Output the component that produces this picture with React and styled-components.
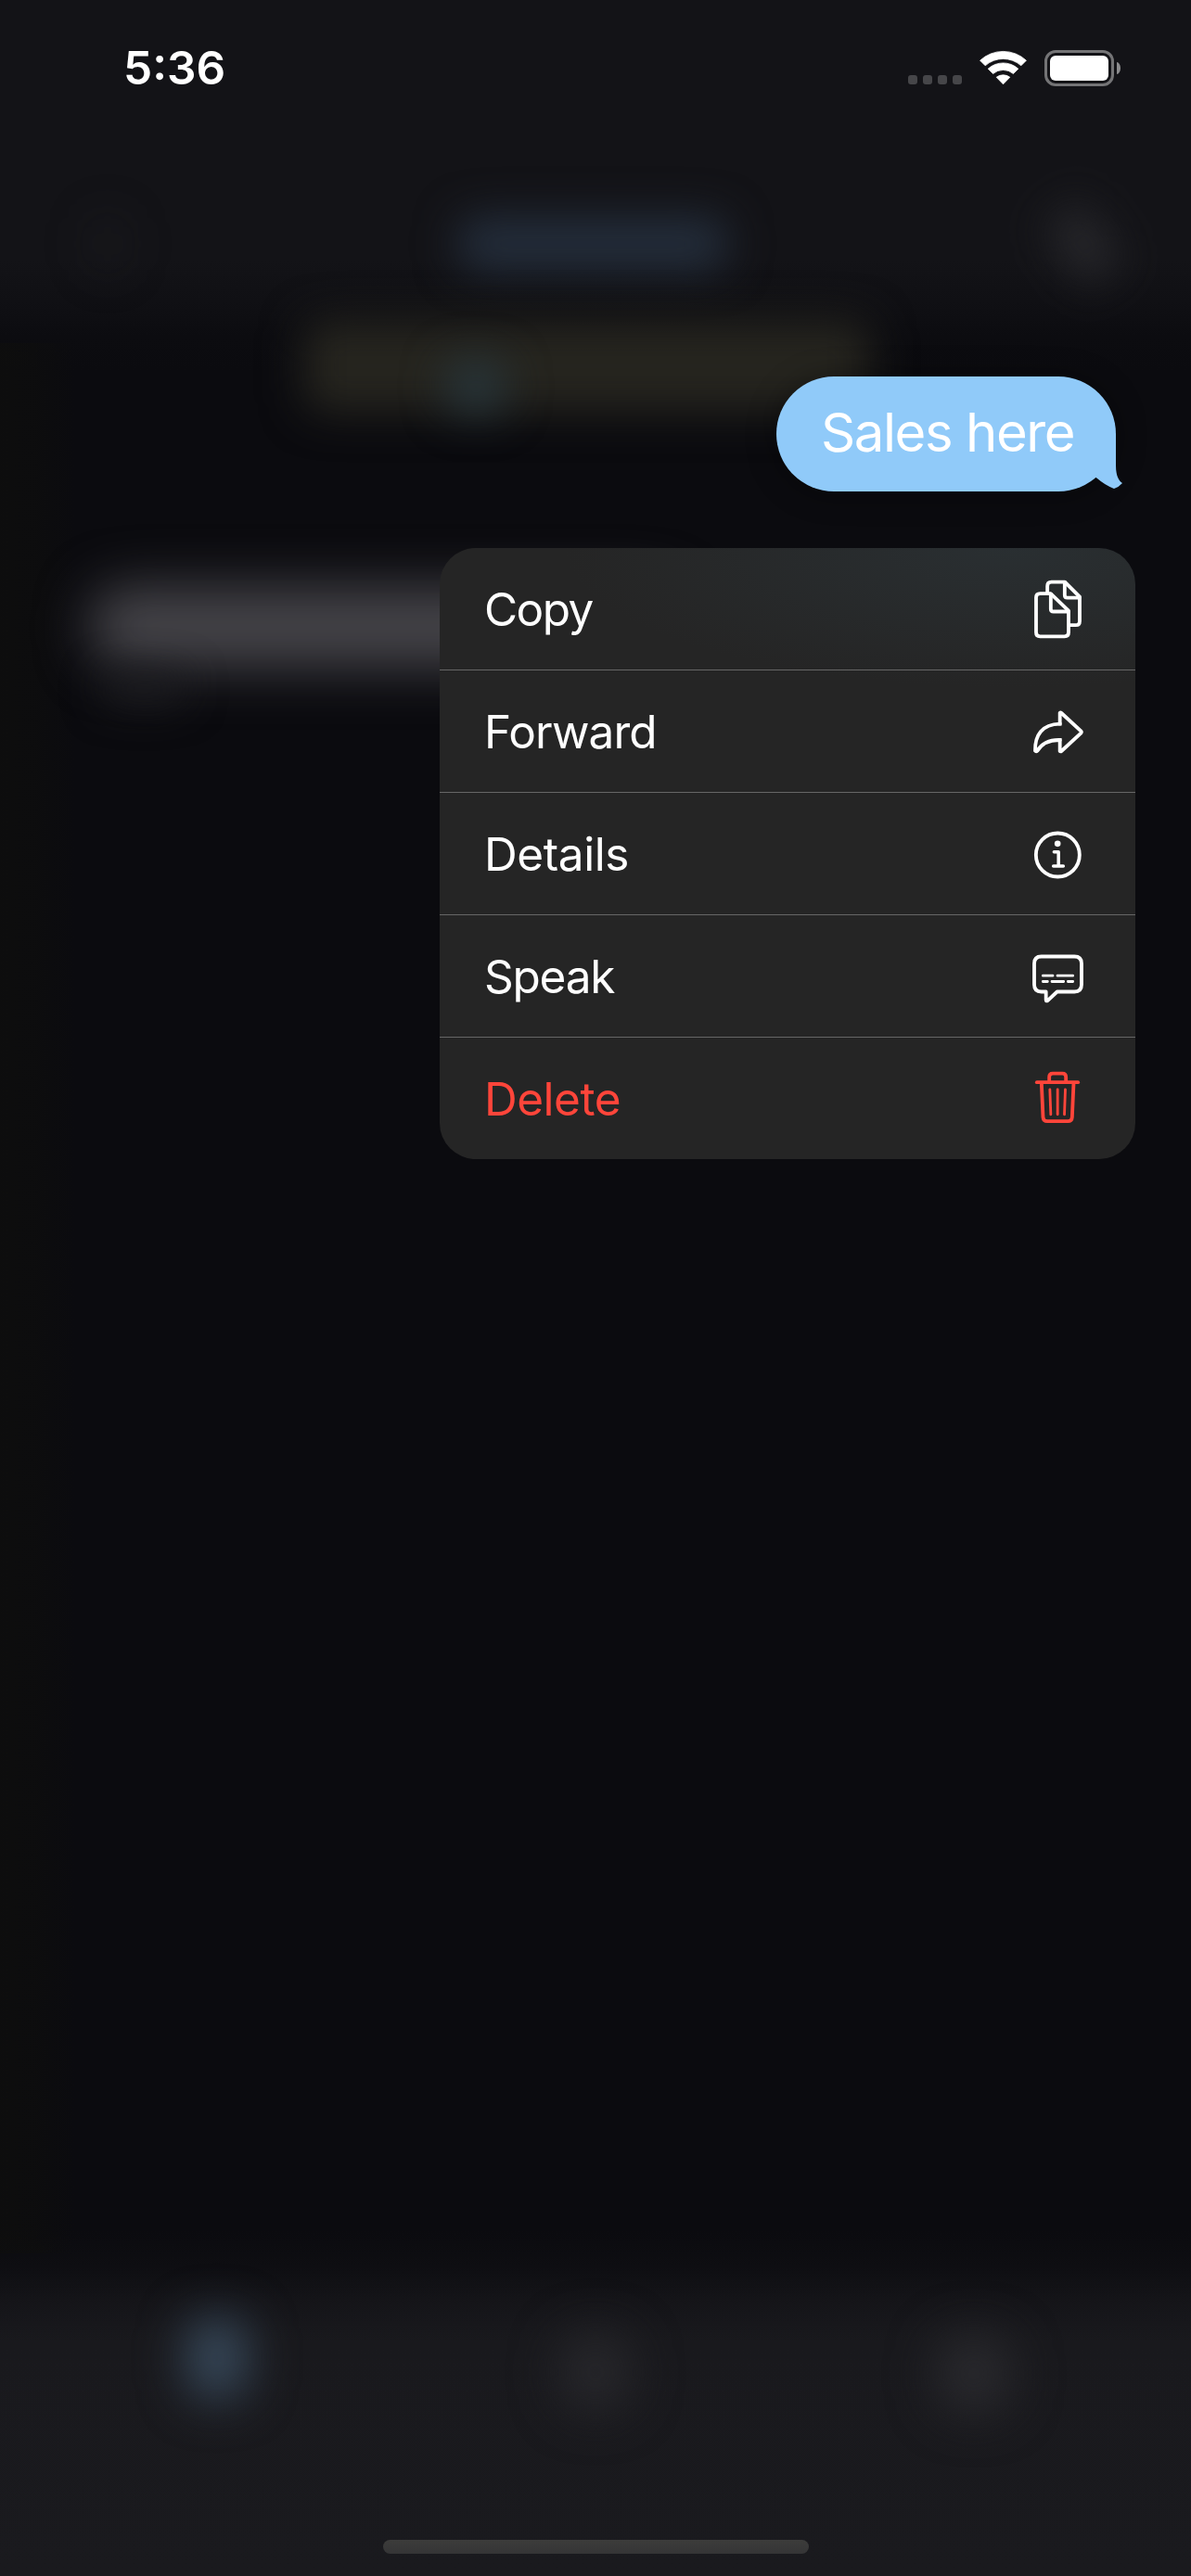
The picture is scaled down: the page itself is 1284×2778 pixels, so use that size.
import React from "react";
import styled, { createGlobalStyle } from "styled-components";

const GlobalStyle = createGlobalStyle`
  *, *::before, *::after { box-sizing: border-box; }
  body {
    margin: 0;
    background: #0b0b0f;
    color: #fff;
    font-family: "Inter", "Liberation Sans", sans-serif;
  }
`;

const Screen = styled.div`
  display: grid;
  width: 1284px;
  height: 2778px;
  overflow: hidden;
`;

/* Dimmed conversation behind the context menu */

const Backdrop = styled.div`
  grid-area: 1 / 1;
  display: flex;
  flex-direction: column;
  min-width: 0;
  overflow: hidden;
  background:
    linear-gradient(90deg, rgba(14, 14, 13, 0.7) 0, rgba(14, 14, 13, 0.6) 36px, transparent 80px) 0 370px / 100% 2060px no-repeat,
    linear-gradient(
      180deg,
      #131317 0,
      #131317 280px,
      #101014 325px,
      #0c0c10 362px,
      #0b0b0f 400px,
      #0b0b0f 2405px,
      #0e0e12 2445px,
      #151519 2485px,
      #19191d 2525px,
      #1a1a1e 2778px
    );
`;

const Glow = styled.div`
  width: ${(p) => p.$w}px;
  height: ${(p) => p.$h}px;
  border-radius: ${(p) => p.$round ?? 20}px;
  background: ${(p) => p.$color};
  filter: blur(${(p) => p.$blur ?? 24}px);
  transform: rotate(${(p) => p.$tilt ?? 0}deg);
  flex: none;
`;

const BackNav = styled.div`
  display: flex;
  justify-content: space-between;
  align-items: center;
  height: 132px;
  margin-top: 197px;
  padding: 0 91px 0 98px;
`;

const BackNotice = styled.div`
  display: flex;
  justify-content: center;
  align-items: flex-end;
  height: 108px;
  margin: 7px 18px 0 0;
`;

const NoticeBox = styled.div`
  display: grid;
  align-items: end;
`;

const NoticeLayer = styled.div`
  grid-area: 1 / 1;
  padding-left: ${(p) => p.$indent ?? 0}px;
`;

const BackThread = styled.div`
  flex: 1;
  display: flex;
  flex-direction: column;
  padding: 188px 0 0 96px;
`;

const BackCaption = styled.div`
  margin: 8px 0 0 14px;
`;

const BackTabs = styled.div`
  display: flex;
  height: 286px;
  padding: 8px 0 0 30px;
`;

const BackTab = styled.div`
  display: flex;
  justify-content: center;
  width: 408px;
  padding-top: ${(p) => p.$drop}px;
`;

/* Foreground */

const Overlay = styled.div`
  grid-area: 1 / 1;
  z-index: 1;
  display: flex;
  flex-direction: column;
  min-width: 0;
`;

const StatusBar = styled.header`
  display: flex;
  justify-content: space-between;
  align-items: center;
  height: 146px;
  padding: 0 76px 0 133px;
`;

const Clock = styled.time`
  font-size: 49.5px;
  font-weight: 600;
  line-height: 60px;
`;

const StatusIcons = styled.div`
  display: flex;
  align-items: center;
`;

const SignalDots = styled.div`
  display: flex;
  gap: 6px;
  margin: 26px 19px 0 0;
`;

const Dot = styled.span`
  width: 10px;
  height: 10px;
  border-radius: 3px;
  background: #464649;
`;

const WifiSvg = styled.svg`
  display: block;
  margin-right: 19px;
`;

const Battery = styled.div`
  display: flex;
  align-items: center;
  gap: 3px;
`;

const BatteryShell = styled.div`
  display: flex;
  width: 75px;
  height: 39px;
  padding: 3px;
  border: 3px solid #747476;
  border-radius: 12px;
`;

const BatteryCharge = styled.div`
  flex: 1;
  border-radius: 6px;
  background: #fff;
`;

const BatteryCap = styled.div`
  width: 4px;
  height: 13px;
  border-radius: 0 4px 4px 0 / 0 6.5px 6.5px 0;
  background: #8c8c8e;
`;

const MessageRow = styled.div`
  display: flex;
  justify-content: flex-end;
  margin-top: 260px;
  padding-right: 81px;
`;

const Bubble = styled.div`
  position: relative;
  display: flex;
  align-items: center;
  width: 366px;
  height: 124px;
  padding: 0 0 4px 48px;
  border-radius: 62px;
  background: #90caf9;
  box-shadow: 0 2px 32px rgba(0, 0, 0, 0.4);
  font-size: 58px;
  line-height: 70px;
  letter-spacing: -1.42px;
  white-space: nowrap;
`;

const BubbleTail = styled.svg`
  position: absolute;
  right: -7px;
  bottom: 0;
`;

const Menu = styled.ul`
  align-self: flex-end;
  width: 750px;
  margin: 61px 60px 0 0;
  padding: 0;
  list-style: none;
  border-radius: 39px;
  overflow: hidden;
  background:
    radial-gradient(ellipse 480px 150px at 82% 0, rgba(42, 48, 51, 0.9), transparent),
    #252525;
`;

const MenuItem = styled.li`
  display: flex;
  justify-content: space-between;
  align-items: center;
  height: 132px;
  padding: 0 54px 0 48px;
  border-bottom: 1px solid #666;
  color: ${(p) => (p.$danger ? "#ff453a" : "#fff")};

  &:last-child {
    height: 131px;
    border-bottom: 0;
  }
`;

const MenuLabel = styled.span`
  font-size: 49.5px;
  line-height: 60px;
  letter-spacing: ${(p) => p.$tracking}px;
`;

const IconSvg = styled.svg`
  display: block;
  width: 60px;
  height: 66px;
  flex: none;
  fill: none;
  stroke: currentColor;
  stroke-width: 11.5px;
  stroke-linecap: round;
  stroke-linejoin: round;
`;

const HomeArea = styled.footer`
  display: flex;
  justify-content: center;
  margin-top: auto;
  padding-bottom: 24px;
`;

const HomeIndicator = styled.div`
  width: 459px;
  height: 15px;
  border-radius: 7.5px;
  background: linear-gradient(180deg, #3c3c3b, #353536);
`;

const CopyIcon = () => (
  <IconSvg viewBox="90 131 180 198">
    <path d="M158 179.500 H124 Q111 179.500 111 192 V305 Q111 318 124 318 H203 Q216 318 216 305 V235 Z" />
    <path d="M158.500 181 V229 Q158.500 237.500 167 237.500 H215" />
    <path d="M147.500 178 V155 Q147.500 142 160.500 142 H204 L252 190 V268 Q252 281.500 239 281.500 H218" />
    <path d="M203.500 143 V184 Q203.500 193 212 193 H251" />
  </IconSvg>
);

const ForwardIcon = () => (
  <IconSvg viewBox="90 527 180 198">
    <path d="M188 565.500 Q190 563.500 193 566 L256 624 Q259 627.500 256 631 L193 689 Q190 691.500 188 689 V653 C150 652 129 665 115 688 Q111 692 108 688 C107 638 130 602 188 601 Z" />
    <path d="M184 653 H188 V657 M184 601 H188 V597" strokeLinejoin="miter" strokeLinecap="butt" />
  </IconSvg>
);

const InfoIcon = () => (
  <IconSvg viewBox="90 23 180 198">
    <circle cx="181" cy="125" r="70.500" />
    <circle cx="180.500" cy="88.500" r="10" fill="currentColor" stroke="none" />
    <path d="M169 115.500 H183.500 V160 M167 161 H199" strokeWidth="10.500" />
  </IconSvg>
);

const SpeakIcon = () => (
  <IconSvg viewBox="90 419.500 180 198">
    <path d="M128 454 H235 Q258 454 258 477 V545 Q258 568 235 568 H179 L149 596 Q143 600 143 594 V568 H128 Q105 568 105 545 V477 Q105 454 128 454 Z" />
    <path d="M133 516 H165 M180 516 H230 M133 535 H148 M162 535 H200 M214 535 H230" strokeWidth="8.500" />
  </IconSvg>
);

const TrashIcon = () => (
  <IconSvg viewBox="90 815.500 180 198">
    <path d="M113.500 861 H246.500" />
    <path d="M153.500 860 V844 Q153.500 832.500 165 832.500 H196 Q207.500 832.500 207.500 844 V860" />
    <path d="M128.500 863 L133.500 974 Q134.500 987 147 987 H214 Q226.500 987 227.500 974 L232.500 863" />
    <path d="M155.500 884 L158.500 965 M180.500 884 V965 M205.500 884 L202.500 965" strokeWidth="8.500" />
  </IconSvg>
);

const WifiIcon = () => (
  <WifiSvg width="51" height="38" viewBox="0 0 51 38" fill="#fff">
    <path d="M0.600 11.200 A36.600 36.600 0 0 1 50.400 11.200 L44.800 16.800 A29 29 0 0 0 6.200 16.800 Z" stroke="#fff" strokeWidth="0.800" strokeLinejoin="round" />
    <path d="M9.200 20.200 A24.300 24.300 0 0 1 41.800 20.200 L36.400 25.500 A16.700 16.700 0 0 0 14.600 25.500 Z" stroke="#fff" strokeWidth="0.800" strokeLinejoin="round" />
    <path d="M18.200 29.300 A12 12 0 0 1 32.800 29.300 L25.500 36.800 Z" stroke="#fff" strokeWidth="0.800" strokeLinejoin="round" />
  </WifiSvg>
);

const menuItems = [
  { label: "Copy", tracking: -1.55, Icon: CopyIcon },
  { label: "Forward", tracking: -0.97, Icon: ForwardIcon },
  { label: "Details", tracking: -0.42, Icon: InfoIcon },
  { label: "Speak", tracking: -1.25, Icon: SpeakIcon },
  { label: "Delete", tracking: -0.49, Icon: TrashIcon, danger: true },
];

function Conversation() {
  return (
    <Backdrop aria-hidden="true">
      <BackNav>
        <Glow $w={36} $h={60} $color="rgba(40,40,44,0.25)" />
        <Glow $w={290} $h={58} $color="#242e3c" $blur={23} />
        <Glow $w={50} $h={84} $color="#27272b" $tilt={-35} $blur={23} />
      </BackNav>
      <BackNotice>
        <NoticeBox>
          <NoticeLayer>
            <Glow $w={610} $h={98} $color="#26251f" $blur={23} />
          </NoticeLayer>
          <NoticeLayer $indent={155}>
            <Glow $w={60} $h={54} $color="#28383f" $blur={24} />
          </NoticeLayer>
        </NoticeBox>
      </BackNotice>
      <BackThread>
        <Glow $w={640} $h={88} $color="#454449" $blur={28} $round={40} />
        <BackCaption>
          <Glow $w={90} $h={30} $color="#1c1c20" $blur={22} />
        </BackCaption>
      </BackThread>
      <BackTabs>
        <BackTab $drop={0}>
          <Glow $w={62} $h={86} $color="#3a4d60" $blur={26} $round={24} />
        </BackTab>
        <BackTab $drop={16}>
          <Glow $w={76} $h={84} $color="#28282c" $blur={26} $round={36} />
        </BackTab>
        <BackTab $drop={18}>
          <Glow $w={80} $h={84} $color="#2a2a2e" $blur={26} $round={36} />
        </BackTab>
      </BackTabs>
    </Backdrop>
  );
}

export default function App() {
  return (
    <>
      <GlobalStyle />
      <Screen>
        <Conversation />
        <Overlay>
          <StatusBar>
            <Clock>5:36</Clock>
            <StatusIcons>
              <SignalDots>
                <Dot />
                <Dot />
                <Dot />
                <Dot />
              </SignalDots>
              <WifiIcon />
              <Battery>
                <BatteryShell>
                  <BatteryCharge />
                </BatteryShell>
                <BatteryCap />
              </Battery>
            </StatusIcons>
          </StatusBar>
          <MessageRow>
            <Bubble>
              Sales here
              <BubbleTail width="70" height="70" viewBox="0 0 70 70" fill="#90caf9">
                <path d="M20 8 H63 V42 C63 52 65.500 58 70 61 Q66 65.500 61 67 Q51 63 43 56 L20 40 Z" />
              </BubbleTail>
            </Bubble>
          </MessageRow>
          <Menu>
            {menuItems.map(({ label, tracking, Icon, danger }) => (
              <MenuItem key={label} $danger={danger}>
                <MenuLabel $tracking={tracking}>{label}</MenuLabel>
                <Icon />
              </MenuItem>
            ))}
          </Menu>
          <HomeArea>
            <HomeIndicator />
          </HomeArea>
        </Overlay>
      </Screen>
    </>
  );
}
